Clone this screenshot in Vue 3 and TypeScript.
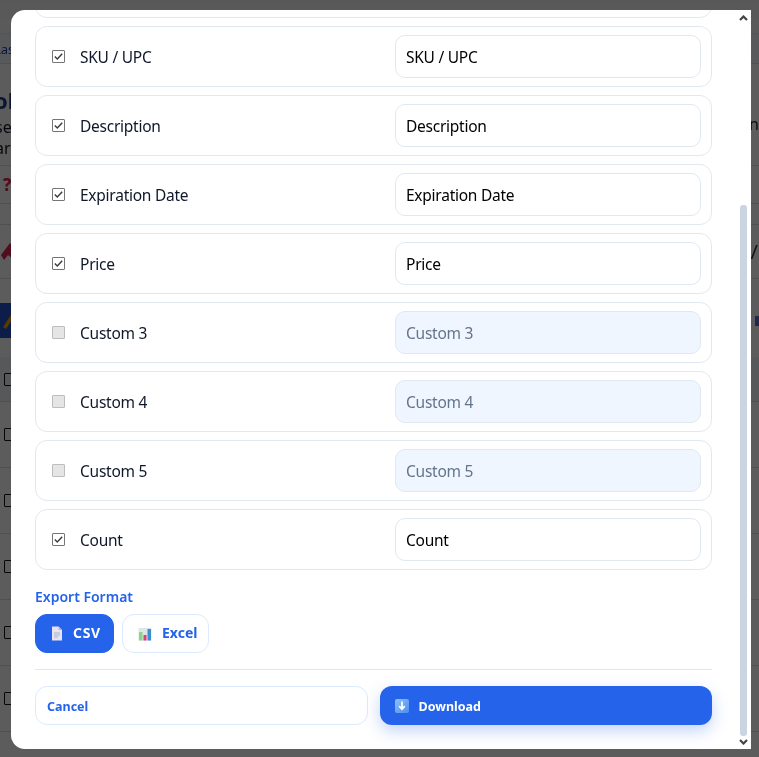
<template>
  <div class="page">
    <div class="page-row top"></div>
    <div class="page-row crumb"><span class="crumb-text">Last</span></div>
    <div class="page-row intro">
      <div class="intro-left">
        <div class="intro-title">ol</div>
        <div class="intro-line">se</div>
        <div class="intro-line">ar</div>
      </div>
      <span class="intro-end">n</span>
    </div>
    <div class="page-row help"><span class="help-mark">?</span></div>
    <div class="page-row spacer"></div>
    <div class="page-row tag">
      <svg width="14" height="20" viewBox="0 0 14 20"><path d="M1 13 L10 1 L14 5 L13 17 L8 13 L4 18 Z" fill="#dc2650" /></svg>
      <span class="tag-slash">/</span>
    </div>
    <div class="page-gap"></div>
    <div class="page-band">
      <div class="band-btn">
        <svg width="12" height="18" viewBox="0 0 12 18"><path d="M1 15 L9 3 L12 5 L4 17 Z" fill="#f59e0b" /></svg>
      </div>
      <span class="band-end"></span>
    </div>
    <div class="page-gap small"></div>
    <div class="table-head"><span class="page-box"></span></div>
    <div v-for="n in 6" :key="n" class="table-row"><span class="page-box"></span></div>
  </div>

  <div class="overlay">
    <div class="modal">
      <div ref="scroller" class="scroller">
        <h2 class="modal-title">Export Fields</h2>
        <div class="field-list">
          <div v-for="f in fields" :key="f.name" class="field">
            <label class="field-name">
              <span class="box-wrap">
                <input type="checkbox" class="box" :checked="f.on" :disabled="!f.on" />
                <svg v-if="f.on" class="tick" width="13" height="13" viewBox="0 0 13 13">
                  <path d="M2.8 6.6 L5.3 9.1 L10.2 3.8" fill="none" stroke="#3b3b3b" stroke-width="1.4" />
                </svg>
              </span>
              <span>{{ f.name }}</span>
            </label>
            <input class="field-input" type="text" :value="f.name" :disabled="!f.on" />
          </div>
        </div>

        <div class="format-label">Export Format</div>
        <div class="format-row">
          <button class="format-btn active">
            <svg class="format-icon" width="12" height="15" viewBox="0 0 12 15">
              <path d="M1 0.5 H7.5 L11 4 V14.5 H1 Z" fill="#e6e3f2" />
              <path d="M7.5 0.5 L11 4 H7.5 Z" fill="#b9b5cf" />
              <path d="M3 7 H9 M3 9 H9 M3 11 H7" stroke="#b4b0c8" stroke-width="1" />
            </svg>
            <span>CSV</span>
          </button>
          <button class="format-btn">
            <svg class="format-icon" width="14" height="14" viewBox="0 0 14 14">
              <rect x="0.5" y="1" width="13" height="12.5" fill="#dfe3ea" />
              <rect x="1" y="5" width="3.5" height="8.5" fill="#86d984" />
              <rect x="5.5" y="8" width="3" height="5.5" fill="#e23c78" />
              <rect x="9.5" y="2" width="3.5" height="11.5" fill="#3b8fd0" />
            </svg>
            <span>Excel</span>
          </button>
        </div>

        <div class="actions">
          <button class="action cancel">Cancel</button>
          <button class="action download">
            <svg width="14" height="14" viewBox="0 0 14 14">
              <defs>
                <linearGradient id="dl" x1="0" y1="0" x2="1" y2="1">
                  <stop offset="0" stop-color="#8fc2f7" />
                  <stop offset="1" stop-color="#4a8df0" />
                </linearGradient>
              </defs>
              <rect width="14" height="14" rx="2" fill="url(#dl)" />
              <path d="M7 2.5 V9.5 M4.2 7.2 L7 10.2 L9.8 7.2" fill="none" stroke="#fff" stroke-width="1.7" />
            </svg>
            <span>Download</span>
          </button>
        </div>
      </div>

      <div class="scrollbar">
        <svg class="arrow" width="9" height="6" viewBox="0 0 9 6"><path d="M1 5 L4.5 1.5 L8 5" fill="none" stroke="#444" stroke-width="2.2" /></svg>
        <div class="track"><div class="thumb"></div></div>
        <svg class="arrow" width="9" height="6" viewBox="0 0 9 6"><path d="M1 1 L4.5 4.5 L8 1" fill="none" stroke="#444" stroke-width="2.2" /></svg>
      </div>
    </div>
  </div>
</template>

<script setup lang="ts">
import { onMounted, ref } from 'vue'

const scroller = ref<HTMLElement | null>(null)

const fields = [
  { name: 'Name', on: true },
  { name: 'Custom 1', on: false },
  { name: 'Custom 2', on: false },
  { name: 'SKU / UPC', on: true },
  { name: 'Description', on: true },
  { name: 'Expiration Date', on: true },
  { name: 'Price', on: true },
  { name: 'Custom 3', on: false },
  { name: 'Custom 4', on: false },
  { name: 'Custom 5', on: false },
  { name: 'Count', on: true },
]

onMounted(() => {
  if (scroller.value) scroller.value.scrollTop = scroller.value.scrollHeight
})
</script>

<style>
html, body { margin: 0; overflow: hidden; background: #fff; }
</style>

<style scoped>
.page { height: 757px; overflow: hidden; background: #fff; filter: blur(0.6px); font-family: "Noto Sans", sans-serif; color: #111827; }
.page-row { display: flex; align-items: center; justify-content: space-between; border-bottom: 1px solid #d8dde5; box-sizing: border-box; }
.top { height: 34px; background: linear-gradient(#f4f4f4, #fafafa); border-bottom-color: #e5e7eb; }
.crumb { height: 30px; background: #f4f7fc; }
.crumb-text { color: #1e40af; font-size: 13px; margin-left: -6px; }
.intro { height: 102px; align-items: flex-start; padding-top: 22px; }
.intro-title { font-size: 22px; font-weight: 700; color: #1e3a8a; margin: 0 0 3px -6px; line-height: 28px; }
.intro-line { font-size: 16px; line-height: 21px; margin-left: -5px; }
.intro-end { font-size: 16px; margin: 27px 0 0 auto; }
.help { height: 38px; }
.help-mark { color: #dc2650; font-weight: 800; font-size: 17px; margin-left: 3px; }
.spacer { height: 21px; }
.tag { height: 54px; }
.tag-slash { font-size: 20px; color: #333; margin-right: 1px; }
.page-gap { height: 24px; }
.page-gap.small { height: 19px; }
.page-band { height: 35px; display: flex; align-items: center; justify-content: space-between; }
.band-btn { width: 40px; height: 100%; background: #2050c8; display: flex; align-items: center; padding-left: 2px; box-sizing: border-box; }
.band-end { width: 4px; height: 10px; background: #5470e0; }
.table-head { height: 45px; background: #eef3fa; display: flex; align-items: center; padding-left: 4px; border-bottom: 1px solid #d8dde5; box-sizing: border-box; }
.table-row { height: 66px; display: flex; align-items: center; padding-left: 4px; border-bottom: 1px solid #d8dde5; box-sizing: border-box; }
.page-box { width: 11px; height: 11px; border: 1px solid #111; border-radius: 1px; }

.overlay { position: fixed; inset: 0; background: rgba(0, 0, 0, 0.64); padding: 10px 8px 8px 11px; box-sizing: border-box; display: flex; }
.modal { position: relative; width: 740px; height: 739px; background: #fff; border-radius: 14px 0 0 14px; overflow: hidden; font-family: "Noto Sans", sans-serif; }
.scroller { height: 100%; box-sizing: border-box; overflow-y: scroll; scrollbar-width: none; padding: 24px 39px 24px 24px; }
.modal-title { margin: 0 0 14px; font-size: 20px; color: #1e3a8a; }
.field-list { display: flex; flex-direction: column; gap: 8px; }
.field { height: 61px; box-sizing: border-box; display: flex; align-items: center; padding: 0 10px 0 16px; border: 1px solid #e2e8f0; border-radius: 12px; }
.field-name { flex: 1; display: flex; align-items: center; gap: 15px; font-size: 15.5px; letter-spacing: -0.25px; color: #0f172a; }
.box-wrap { position: relative; width: 13px; height: 13px; display: block; }
.box { appearance: none; display: block; margin: 0; width: 13px; height: 13px; box-sizing: border-box; border: 1px solid #767676; border-radius: 1px; background: #fff; }
.box:disabled { background: #e5e5e5; border-color: #bdbdbd; }
.tick { position: absolute; left: 0; top: 0; }
.field-input { width: 306px; height: 43px; box-sizing: border-box; padding: 0 10px; border: 1px solid #e2e8f0; border-radius: 10px; background: #fff; font: 15.5px "Noto Sans", sans-serif; letter-spacing: -0.25px; color: #000; outline: none; }
.field-input:disabled { background: #eff6ff; color: #64748b; }

.format-label { margin-top: 17px; font-size: 14px; line-height: 20px; font-weight: 600; color: #2563eb; }
.format-row { display: flex; gap: 8px; margin-top: 7px; padding-bottom: 16px; border-bottom: 1px solid #e2e8f0; }
.format-btn { height: 39px; box-sizing: border-box; display: flex; align-items: center; gap: 10px; padding: 0 11px 2px 15px; border: 1px solid #dbeafe; border-radius: 12px; background: #fff; color: #2563eb; font: 700 14px "Noto Sans", sans-serif; }
.format-btn.active { gap: 10px; width: 79px; background: #2563eb; border-color: #2563eb; color: #fff; letter-spacing: 0.7px; }
.format-icon { margin-top: 2px; }
.actions { display: grid; grid-template-columns: 1fr 1fr; gap: 12px; margin-top: 16px; }
.action { height: 39px; box-sizing: border-box; display: flex; align-items: center; border-radius: 12px; font: 700 12.5px "Noto Sans", sans-serif; text-align: left; padding-top: 2px; }
.cancel { padding-left: 11px; padding-right: 12px; border: 1px solid #dbeafe; background: #fff; color: #2563eb; }
.download { gap: 10px; padding-left: 15px; padding-right: 15px; border: 0; background: #2563eb; color: #fff; box-shadow: 0 6px 16px rgba(37, 99, 235, 0.28); }

.scrollbar { position: absolute; top: 0; right: 0; bottom: 0; width: 15px; background: #fff; display: flex; flex-direction: column; align-items: center; padding: 5px 0 4px; box-sizing: border-box; }
.arrow { flex: none; margin-right: 1px; }
.track { flex: 1; width: 7px; margin: 0 1px 0 0; padding: 184px 0 3px; box-sizing: border-box; display: flex; }
.thumb { flex: 1; background: #cbd5e1; border-radius: 3px; }
</style>
